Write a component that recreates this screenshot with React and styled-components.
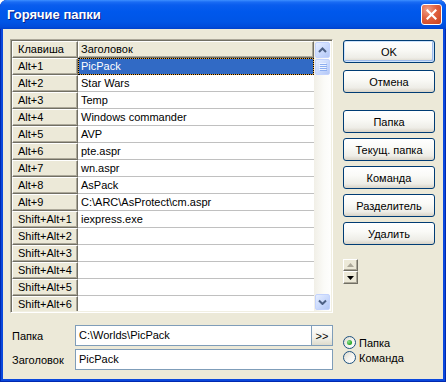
import styled, { createGlobalStyle } from "styled-components";

const GlobalStyle = createGlobalStyle`
  html, body { margin: 0; padding: 0; background: #fff; }
  body { font-family: "Liberation Sans", Arial, sans-serif; font-size: 11px; color: #000; }
  * { box-sizing: border-box; }
`;

const Window = styled.div`
  width: 446px;
  height: 382px;
  display: flex;
  flex-direction: column;
  border-radius: 7px 7px 0 0;
  overflow: hidden;
  background: #0A48DC;
  box-shadow: inset 1px 0 0 #0029B0, inset -1px 0 0 #0029B0, inset 0 -1px 0 #0029B0;
`;

const TitleBar = styled.div`
  height: 29px;
  flex: none;
  display: flex;
  align-items: center;
  padding: 0 4px 0 7px;
  background: linear-gradient(180deg, #3D8FFF 0, #1A6CF4 2px, #0A5DEE 5px, #0058EC 40%, #0055E6 75%, #004CDB 92%, #0041CC 100%);
`;

const Title = styled.div`
  flex: 1;
  color: #fff;
  font: bold 13px "Liberation Sans", Arial, sans-serif;
  text-shadow: 1px 1px 0 #0A1F86;
`;

const CloseButton = styled.button`
  width: 21px;
  height: 21px;
  padding: 0;
  display: flex;
  align-items: center;
  justify-content: center;
  border: 1px solid #fff;
  border-radius: 3px;
  background: radial-gradient(circle at 30% 25%, #F0A088 0%, #E0603F 45%, #C8401C 100%);
`;

const Body = styled.div`
  flex: 1;
  margin: 0 3px 3px;
  background: #ECE9D8;
  display: flex;
  gap: 10px;
  padding: 10px 8px 9px 7px;
`;

const LeftColumn = styled.div`
  width: 323px;
  display: flex;
  flex-direction: column;
`;

const GridBox = styled.div`
  height: 274px;
  display: flex;
  border: 1px solid;
  border-color: #ACA899 #FFFFFF #FFFFFF #ACA899;
  box-shadow: inset 1px 1px 0 #716F64, inset -1px -1px 0 #F1EFE2;
  padding: 1px;
  background: #fff;
`;

const Table = styled.div`
  flex: 1;
  overflow: hidden;
  display: grid;
  grid-template-columns: 66px 1fr;
  grid-auto-rows: 17px;
  align-content: start;
`;

const HeadCell = styled.div`
  background: #ECE9D8;
  border-top: 1px solid #fff;
  border-left: 1px solid #fff;
  border-right: 1px solid #716F64;
  border-bottom: 1px solid #716F64;
  box-shadow: inset -1px -1px 0 #ACA899;
  padding-left: ${(p) => p.$pad}px;
  line-height: 15px;
  white-space: nowrap;
  overflow: hidden;
`;

const DataCell = styled.div`
  background: #fff;
  border-bottom: 1px solid #C0C0C0;
  padding-left: 3px;
  line-height: 16px;
  white-space: nowrap;
  overflow: hidden;
`;

const SelectedCell = styled(DataCell)`
  color: #fff;
  border: 1px dotted #000;
  padding-left: 2px;
  line-height: 15px;
  background: linear-gradient(#316AC5, #316AC5) padding-box, #E9A43A border-box;
`;

const Scrollbar = styled.div`
  width: 17px;
  flex: none;
  display: flex;
  flex-direction: column;
  background: linear-gradient(90deg, #F1EFE7 0%, #FBFBF8 60%, #FEFEFD 100%);
`;

const ScrollButton = styled.div`
  height: 16px;
  margin: ${(p) => p.$m};
  border: 1px solid #C3D3FD;
  border-radius: 2px;
  background: linear-gradient(135deg, #E6EEFF 0%, #C9D9FC 55%, #B4C8F6 100%);
  display: flex;
  align-items: center;
  justify-content: center;
`;

const ScrollSpace = styled.div`
  flex: 1;
`;

const FieldArea = styled.div`
  margin-top: 12px;
  display: flex;
  flex-direction: column;
  gap: 3px;
`;

const FieldRow = styled.div`
  height: 21px;
  display: flex;
  align-items: center;
`;

const FieldLabel = styled.label`
  width: 65px;
  flex: none;
  padding-left: 2px;
`;

const TextBox = styled.div`
  flex: 1;
  height: 21px;
  border: 1px solid #7F9DB9;
  background: #fff;
  padding: 0 3px;
  line-height: 19px;
  white-space: nowrap;
  overflow: hidden;
`;

const BrowseButton = styled.button`
  width: 21px;
  height: 21px;
  flex: none;
  padding: 0;
  border: 1px solid #7F9DB9;
  border-left: 0;
  background: linear-gradient(180deg, #FDFDFB 0%, #F2F1EA 60%, #DEDBCC 100%);
  font: 11px "Liberation Sans", Arial, sans-serif;
  color: #000;
`;

const RightColumn = styled.div`
  width: 92px;
  display: flex;
  flex-direction: column;
`;

const Button = styled.button`
  height: 23px;
  width: 100%;
  flex: none;
  margin-top: ${(p) => p.$mt}px;
  padding: 0;
  border: 1px solid #003C74;
  border-radius: 3px;
  background: linear-gradient(180deg, #FFFFFF 0%, #FAFAF7 40%, #EEEDE7 80%, #D8D3C7 100%);
  box-shadow: ${(p) =>
    p.$default ? "inset 0 0 0 1px #CDE2FB, inset -1px -1px 0 1px #9DBAEA" : "none"};
  font: 11px "Liberation Sans", Arial, sans-serif;
  color: #000;
`;

const Spin = styled.div`
  margin-top: 14px;
  width: 15px;
  display: flex;
  flex-direction: column;
`;

const SpinButton = styled.div`
  height: ${(p) => p.$h}px;
  background: #ECE9D8;
  border-top: 1px solid #fff;
  border-left: 1px solid #fff;
  border-right: 1px solid #716F64;
  border-bottom: 1px solid #716F64;
  box-shadow: inset -1px -1px 0 #ACA899;
  display: flex;
  align-items: center;
  justify-content: center;
`;

const RadioGroup = styled.div`
  margin-top: auto;
  margin-bottom: 5px;
  display: flex;
  flex-direction: column;
`;

const RadioRow = styled.div`
  height: 15px;
  display: flex;
  align-items: center;
  gap: 3px;
`;

const RadioCircle = styled.span`
  width: 13px;
  height: 13px;
  border-radius: 50%;
  border: 1px solid #1C5180;
  background: linear-gradient(135deg, #DCD9CC 0%, #F4F3EE 50%, #FFFFFF 100%);
  display: flex;
  align-items: center;
  justify-content: center;
  &::after {
    content: "";
    width: 5px;
    height: 5px;
    border-radius: 50%;
    background: ${(p) => (p.$checked ? "radial-gradient(circle at 35% 35%, #8EE48E, #21A121 70%)" : "transparent")};
  }
`;

const rows = [
  ["Alt+1", "PicPack"],
  ["Alt+2", "Star Wars"],
  ["Alt+3", "Temp"],
  ["Alt+4", "Windows commander"],
  ["Alt+5", "AVP"],
  ["Alt+6", "pte.aspr"],
  ["Alt+7", "wn.aspr"],
  ["Alt+8", "AsPack"],
  ["Alt+9", "C:\\ARC\\AsProtect\\cm.aspr"],
  ["Shift+Alt+1", "iexpress.exe"],
  ["Shift+Alt+2", ""],
  ["Shift+Alt+3", ""],
  ["Shift+Alt+4", ""],
  ["Shift+Alt+5", ""],
  ["Shift+Alt+6", ""],
];

const Chevron = ({ down }) => (
  <svg width="9" height="6" viewBox="0 0 9 6">
    <polyline
      points={down ? "1,1.5 4.5,5 8,1.5" : "1,5 4.5,1.5 8,5"}
      fill="none"
      stroke="#4D6185"
      strokeWidth="2"
    />
  </svg>
);

const Grip = () => (
  <svg width="8" height="8" viewBox="0 0 8 8">
    {[0, 2, 4, 6].map((y) => (
      <g key={y}>
        <rect x="0" y={y} width="7" height="1" fill="#EEF4FF" />
        <rect x="1" y={y + 1} width="7" height="1" fill="#8DAEF0" />
      </g>
    ))}
  </svg>
);

const SpinArrow = ({ down, color }) => (
  <svg width="7" height="4" viewBox="0 0 7 4">
    <polygon points={down ? "0,0 7,0 3.5,4" : "0,4 7,4 3.5,0"} fill={color} />
  </svg>
);

export default function App() {
  return (
    <>
      <GlobalStyle />
      <Window>
        <TitleBar>
          <Title>Горячие папки</Title>
          <CloseButton>
            <svg width="11" height="11" viewBox="0 0 11 11">
              <path d="M1.5 1.5 L9.5 9.5 M9.5 1.5 L1.5 9.5" stroke="#fff" strokeWidth="2.2" strokeLinecap="square" />
            </svg>
          </CloseButton>
        </TitleBar>
        <Body>
          <LeftColumn>
            <GridBox>
              <Table>
                <HeadCell $pad={5}>Клавиша</HeadCell>
                <HeadCell $pad={2}>Заголовок</HeadCell>
                {rows.map(([key, title], i) => (
                  <Row key={key} keyName={key} title={title} selected={i === 0} />
                ))}
              </Table>
              <Scrollbar>
                <ScrollButton $m="1px 1px 0">
                  <Chevron />
                </ScrollButton>
                <ScrollButton $m="1px 1px 0">
                  <Grip />
                </ScrollButton>
                <ScrollSpace />
                <ScrollButton $m="0 1px 1px">
                  <Chevron down />
                </ScrollButton>
              </Scrollbar>
            </GridBox>
            <FieldArea>
              <FieldRow>
                <FieldLabel>Папка</FieldLabel>
                <TextBox>C:\Worlds\PicPack</TextBox>
                <BrowseButton>&gt;&gt;</BrowseButton>
              </FieldRow>
              <FieldRow>
                <FieldLabel>Заголовок</FieldLabel>
                <TextBox>PicPack</TextBox>
              </FieldRow>
            </FieldArea>
          </LeftColumn>
          <RightColumn>
            <Button $mt={1} $default>OK</Button>
            <Button $mt={7}>Отмена</Button>
            <Button $mt={17}>Папка</Button>
            <Button $mt={5}>Текущ. папка</Button>
            <Button $mt={5}>Команда</Button>
            <Button $mt={5}>Разделитель</Button>
            <Button $mt={5}>Удалить</Button>
            <Spin>
              <SpinButton $h={12}>
                <SpinArrow color="#ACA899" />
              </SpinButton>
              <SpinButton $h={13}>
                <SpinArrow down color="#000" />
              </SpinButton>
            </Spin>
            <RadioGroup>
              <RadioRow>
                <RadioCircle $checked />
                Папка
              </RadioRow>
              <RadioRow>
                <RadioCircle />
                Команда
              </RadioRow>
            </RadioGroup>
          </RightColumn>
        </Body>
      </Window>
    </>
  );
}

function Row({ keyName, title, selected }) {
  const Cell = selected ? SelectedCell : DataCell;
  return (
    <>
      <HeadCell $pad={5}>{keyName}</HeadCell>
      <Cell>{title}</Cell>
    </>
  );
}
